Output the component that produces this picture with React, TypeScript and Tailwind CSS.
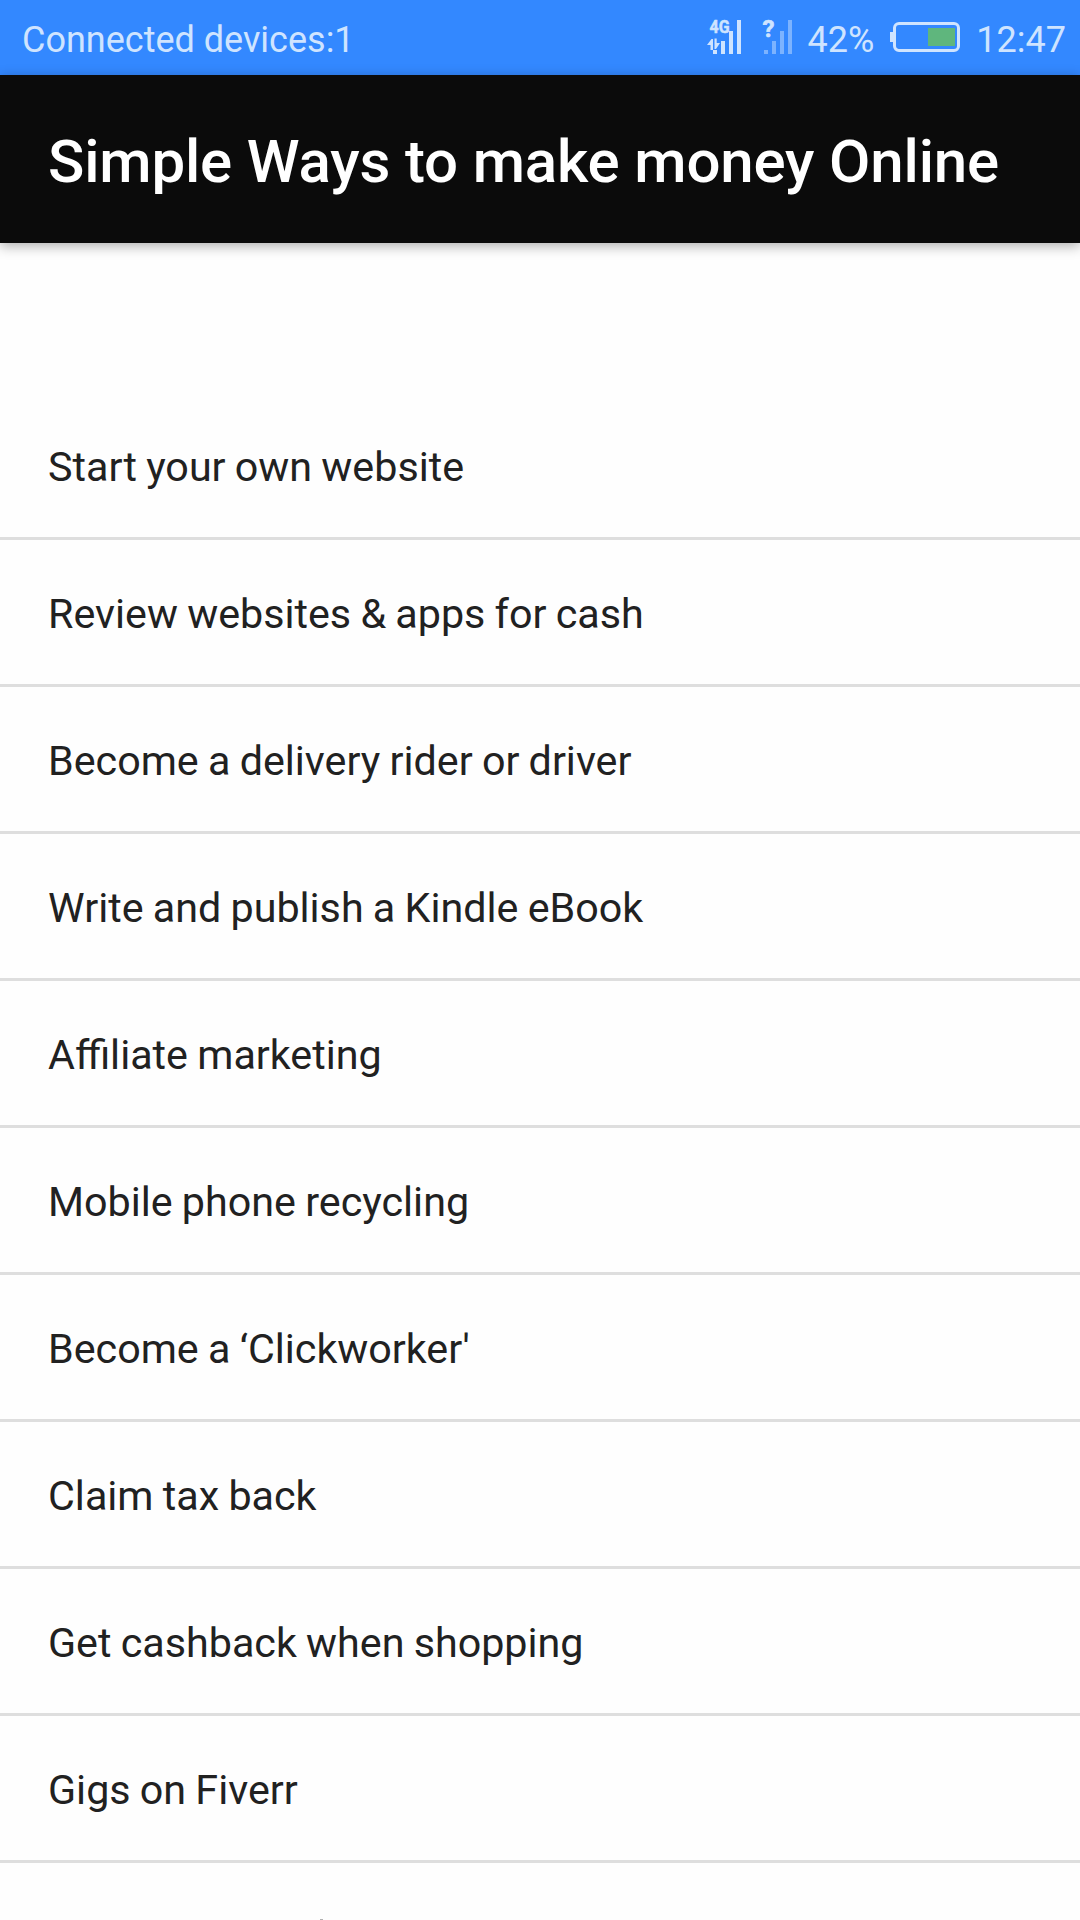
import React from "react";

const items = [
  "Start your own website",
  "Review websites & apps for cash",
  "Become a delivery rider or driver",
  "Write and publish a Kindle eBook",
  "Affiliate marketing",
  "Mobile phone recycling",
  "Become a ‘Clickworker'",
  "Claim tax back",
  "Get cashback when shopping",
  "Gigs on Fiverr",
];

const SignalIcons = () => (
  <svg width="88" height="39" viewBox="0 0 88 39" className="overflow-visible" fill="#cfe4ff" fontFamily="Roboto, sans-serif" fontWeight="700">
    <path d="M7 32h4v4h-4zM15 23h4v13h-4zM23 13h4v23h-4zM31 2h4v34h-4z" />
    <path d="M1 27l4.500-6h1.500v11h-2.500v-5zM8.500 20.500h2.200v4.500h3.300l-4 6h-1.500z" />
    <text x="3.500" y="15" fontSize="17.500" textLength="20" lengthAdjust="spacingAndGlyphs" stroke="#cfe4ff" strokeWidth="0.500">
      4G
    </text>
    <path d="M58 32h4v4h-4zM66 23h4v13h-4zM74 13h4v23h-4zM82 2h4v34h-4z" fill="#7cb3ff" />
    <text x="56.500" y="18.500" fontSize="24" stroke="#cfe4ff" strokeWidth="0.600">
      ?
    </text>
  </svg>
);

const BatteryIcon = () => (
  <svg width="70" height="31" viewBox="0 0 70 31" fill="none">
    <rect x="4.500" y="1.500" width="64" height="27" rx="4.500" stroke="#cfe4ff" strokeWidth="3" />
    <path d="M0 10h3v10h-3z" fill="#cfe4ff" />
    <path d="M38 6h27v18h-27z" fill="#5fb67d" />
  </svg>
);

const StatusBar = () => (
  <div className="flex h-[75px] shrink-0 items-center bg-[#3388ff] pr-3.5 pl-[22px] text-[36px] text-[#cfe4ff]">
    <span className="pt-1">Connected devices:1</span>
    <div className="ml-auto flex items-center">
      <SignalIcons />
      <span className="pt-1 pl-3.5">42%</span>
      <div className="pl-4">
        <BatteryIcon />
      </div>
      <span className="pt-1 pl-4">12:47</span>
    </div>
  </div>
);

const App = () => {
  return (
    <div className="flex h-[1920px] w-[1080px] flex-col overflow-hidden bg-[#fefefe] font-['Roboto',sans-serif] whitespace-nowrap">
      <StatusBar />
      <header className="flex h-[168px] shrink-0 items-center bg-[#0b0b0b] pt-1.5 pl-12 shadow-[0_3px_12px_rgba(0,0,0,0.32)]">
        <h1 className="text-[60px] font-medium tracking-[-0.16px] text-white">Simple Ways to make money Online</h1>
      </header>
      <ul className="pt-[150px] text-[41.25px] [word-spacing:-1px] text-[#212121]">
        {items.map((item) => (
          <li key={item} className="flex h-[147px] items-center border-b-[3px] border-[#dedede] pt-1.5 pl-12">
            {item}
          </li>
        ))}
      </ul>
      <div className="mt-auto ml-[320px] h-px w-[3px] bg-[#b0b0b0]" />
    </div>
  );
};

export default App;
